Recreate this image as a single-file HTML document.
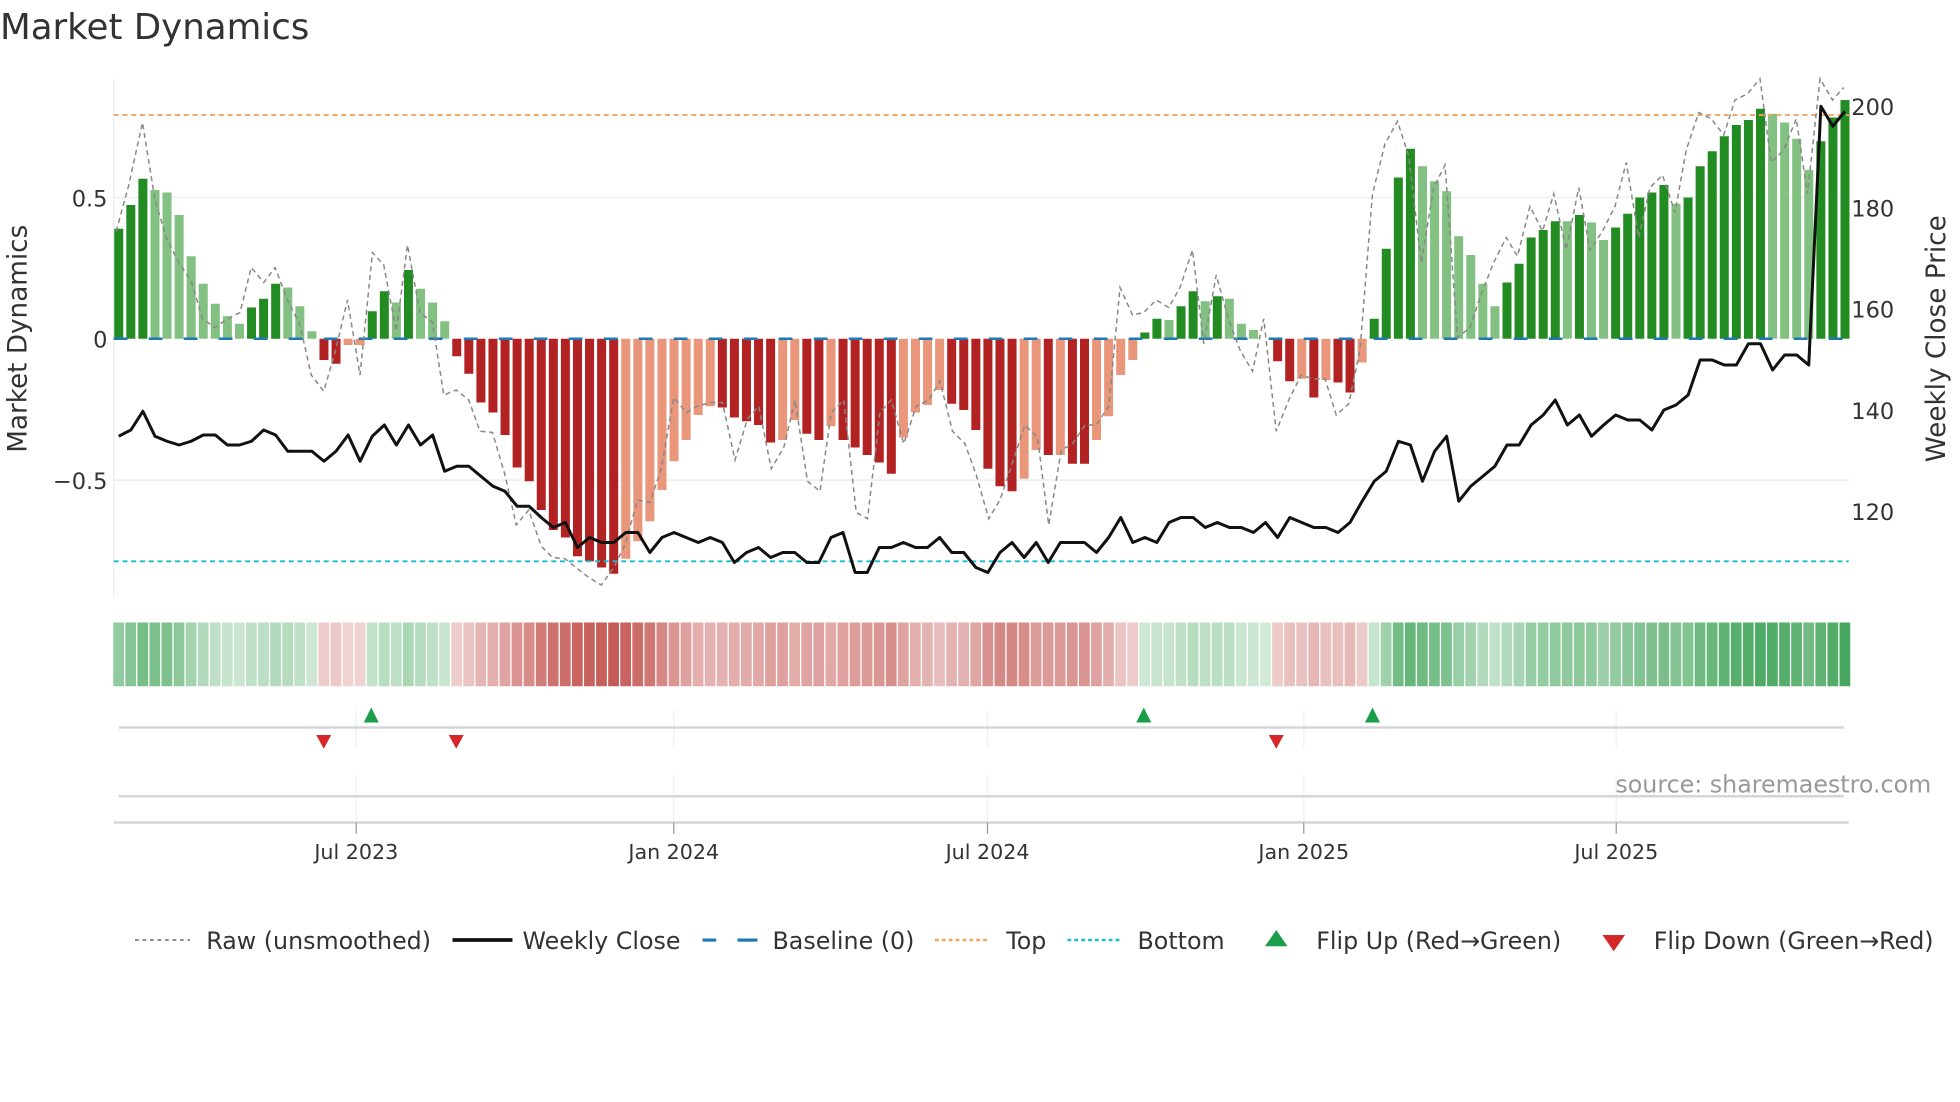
<!DOCTYPE html>
<html><head><meta charset="utf-8"><style>
html,body{margin:0;padding:0;background:#fff;overflow:hidden}
svg{display:block}
text{font-family:"DejaVu Sans","Liberation Sans",sans-serif}
</style></head><body>
<svg id="s" width="1960" height="1102" viewBox="0 0 1568 881.6" xmlns="http://www.w3.org/2000/svg">
<rect width="1568" height="882" fill="#fff"/>
<text x="0" y="31" font-size="28.5" fill="#333">Market Dynamics</text>
<line x1="91" y1="63" x2="91" y2="478" stroke="#e8ebf0" stroke-width="1"/>
<line x1="91" y1="158" x2="1479" y2="158" stroke="#eef0f4" stroke-width="1.5"/>
<line x1="91" y1="384" x2="1479" y2="384" stroke="#eef0f4" stroke-width="1.5"/>
<g font-size="18" fill="#333" text-anchor="end">
<text x="86" y="165">0.5</text><text x="86" y="278">0</text><text x="86" y="391">−0.5</text>
</g>
<g font-size="18" fill="#333">
<text x="1481" y="92">200</text><text x="1481" y="173">180</text><text x="1481" y="254">160</text><text x="1481" y="335">140</text><text x="1481" y="416">120</text>
</g>
<text transform="translate(21,271) rotate(-90)" font-size="21" fill="#333" text-anchor="middle">Market Dynamics</text>
<text transform="translate(1556,271) rotate(-90)" font-size="21" fill="#333" text-anchor="middle">Weekly Close Price</text>
<g id="bars"></g>
<line x1="91" y1="271" x2="1479" y2="271" stroke="#1f77b4" stroke-width="2" stroke-dasharray="11,17"/>
<line x1="91" y1="92" x2="1479" y2="92" stroke="#f4a460" stroke-width="1.5" stroke-dasharray="4,3"/>
<line x1="91" y1="449" x2="1479" y2="449" stroke="#17becf" stroke-width="1.5" stroke-dasharray="4,3"/>
<polyline id="raw" fill="none" stroke="#888" stroke-width="1.2" stroke-dasharray="4,3"/>
<polyline id="close" fill="none" stroke="#111" stroke-width="2.4" stroke-linejoin="round"/>
<g id="heat"></g>
<g stroke="#eef0f2" stroke-width="1">
<line x1="285" y1="568" x2="285" y2="598"/><line x1="539" y1="568" x2="539" y2="598"/><line x1="790" y1="568" x2="790" y2="598"/><line x1="1043" y1="568" x2="1043" y2="598"/><line x1="1293" y1="568" x2="1293" y2="598"/>
<line x1="285" y1="620" x2="285" y2="658"/><line x1="539" y1="620" x2="539" y2="658"/><line x1="790" y1="620" x2="790" y2="658"/><line x1="1043" y1="620" x2="1043" y2="658"/><line x1="1293" y1="620" x2="1293" y2="658"/>
</g>
<line x1="95" y1="582" x2="1475" y2="582" stroke="#d3d6d8" stroke-width="2"/>
<line x1="95" y1="637" x2="1475" y2="637" stroke="#d3d6d8" stroke-width="2"/>
<line x1="91" y1="658" x2="1479" y2="658" stroke="#d3d6d8" stroke-width="2"/>
<g stroke="#999" stroke-width="1">
<line x1="285" y1="658" x2="285" y2="667"/><line x1="539" y1="658" x2="539" y2="667"/><line x1="790" y1="658" x2="790" y2="667"/><line x1="1043" y1="658" x2="1043" y2="667"/><line x1="1293" y1="658" x2="1293" y2="667"/>
</g>
<g fill="#1a9e4a"><polygon points="297,566 291,578 303,578"/><polygon points="915,566 909,578 921,578"/><polygon points="1098,566 1092,578 1104,578"/></g>
<g fill="#d62728"><polygon points="253,588 265,588 259,599"/><polygon points="359,588 371,588 365,599"/><polygon points="1015,588 1027,588 1021,599"/></g>
<text x="1545" y="634" font-size="19" fill="#999" text-anchor="end">source: sharemaestro.com</text>
<g font-size="16.5" fill="#333" text-anchor="middle">
<text x="285" y="687">Jul 2023</text><text x="539" y="687">Jan 2024</text><text x="790" y="687">Jul 2024</text><text x="1043" y="687">Jan 2025</text><text x="1293" y="687">Jul 2025</text>
</g>
<g font-size="19" fill="#333">
<line x1="108" y1="752" x2="152" y2="752" stroke="#888" stroke-width="1.5" stroke-dasharray="3,3"/>
<text x="165" y="759">Raw (unsmoothed)</text>
<line x1="362" y1="752" x2="410" y2="752" stroke="#111" stroke-width="3"/>
<text x="418" y="759">Weekly Close</text>
<line x1="562" y1="752" x2="606" y2="752" stroke="#1f77b4" stroke-width="2.5" stroke-dasharray="11,17"/>
<line x1="591" y1="752" x2="606" y2="752" stroke="#1f77b4" stroke-width="2.5"/>
<text x="618" y="759">Baseline (0)</text>
<line x1="748" y1="752" x2="792" y2="752" stroke="#f4a460" stroke-width="2" stroke-dasharray="3,2.5"/>
<text x="805" y="759">Top</text>
<line x1="854" y1="752" x2="898" y2="752" stroke="#17becf" stroke-width="2" stroke-dasharray="3,2.5"/>
<text x="910" y="759">Bottom</text>
<polygon points="1021,744 1012,757 1030,757" fill="#1a9e4a"/>
<text x="1053" y="759">Flip Up (Red→Green)</text>
<polygon points="1282,748 1300,748 1291,761" fill="#d62728"/>
<text x="1323" y="759">Flip Down (Green→Red)</text>
</g>
</svg>
<script>
var NS="http://www.w3.org/2000/svg";
var B="183D 164D 143D 152L 154L 172L 205L 227L 243L 253L 259L 246D 239D 227D 230L 245L 265L 288R 291R 276S 276S 249D 233D 242L 216D 231L 242L 257L 285R 299R 322R 330R 348R 374R 385R 408R 424R 430R 445R 449R 454R 459R 447S 433S 417S 392S 369S 352S 332S 325S 326R 334R 337R 340R 354R 352S 336S 347R 352R 341S 352R 358R 364R 370R 379R 350S 330S 324S 312S 323R 328R 344R 375R 389R 393R 383S 360S 364R 364S 371R 371R 352S 333S 300S 288S 266D 255D 256L 245D 233D 241L 237D 239L 259L 264L 271N 289R 305R 303S 318R 304S 306R 314R 290S 255D 199D 142D 119D 133L 145L 153L 189L 204L 227L 245L 226D 211D 190D 184D 177D 177L 172D 178L 192L 182D 171D 158D 154D 148D 163L 158D 133D 121D 109D 100D 96D 87D 91L 98L 111L 136L 113D 94D 80D".split(" ");
var C=[349,344,329,349,353,356,353,348,348,356,356,353,344,348,361,361,361,369,361,348,369,349,340,356,340,356,348,377,373,373,381,389,393,405,405,414,422,418,438,430,434,434,426,426,442,430,426,430,434,430,434,450,442,438,446,442,442,450,450,430,426,458,458,438,438,434,438,438,430,442,442,454,458,442,434,446,434,450,434,434,434,442,430,414,434,430,434,418,414,414,422,418,422,422,426,418,430,414,418,422,422,426,418,401,385,377,353,356,385,361,349,401,389,381,373,356,356,340,332,320,340,332,349,340,332,336,336,344,328,324,316,288,288,292,292,275,275,296,284,284,292,85,101,89];
var R="93,185 103,148 114,98 124,160 133,190 143,210 153,225 162,255 172,262 182,255 192,250 201,214 211,226 220,214 230,240 240,260 249,300 259,313 268,282 278,240 288,300 298,202 307,212 317,265 326,196 336,250 346,258 355,316 365,312 375,320 384,345 394,346 404,380 413,420 423,408 433,437 442,446 452,447 462,455 471,462 481,468 491,454 500,436 510,400 520,402 529,375 539,318 549,330 558,325 568,322 578,322 588,368 598,335 607,325 617,375 627,358 636,320 646,385 656,393 665,330 675,320 685,410 694,415 704,330 713,320 723,355 733,325 743,320 752,305 762,345 772,355 781,380 791,415 800,400 810,370 820,340 830,350 839,420 849,360 858,355 868,340 877,340 887,325 896,230 906,252 915,250 925,240 935,246 944,230 954,200 963,275 973,220 983,256 992,280 1002,297 1011,255 1021,345 1031,320 1041,300 1050,303 1060,303 1069,332 1079,323 1088,280 1098,155 1108,115 1118,97 1127,125 1137,210 1147,150 1156,132 1166,270 1176,262 1185,235 1195,210 1205,190 1214,205 1224,165 1234,185 1243,155 1253,200 1263,150 1272,200 1282,185 1292,165 1301,130 1311,190 1320,150 1330,140 1340,170 1349,120 1359,90 1369,95 1379,108 1388,80 1398,75 1408,63 1417,130 1427,120 1437,95 1446,155 1456,63 1466,80 1475,70";
var col={D:"#228b22",L:"#82c182",R:"#b22222",S:"#e9967a"};
var bars=document.getElementById("bars"),heat=document.getElementById("heat"),pts=[];
var step=(1476-95)/143;
for(var i=0;i<B.length;i++){
 var y=parseFloat(B[i]),t=B[i].slice(-1),x=95+i*step;
 if(t!="N"){var r=document.createElementNS(NS,"rect");
  r.setAttribute("x",x-3.6);r.setAttribute("width",7.2);
  r.setAttribute("y",Math.min(y,271));r.setAttribute("height",Math.abs(271-y));
  r.setAttribute("fill",col[t]);bars.appendChild(r);}
 var v=(271-y)/226,h=document.createElementNS(NS,"rect");
 h.setAttribute("x",x-4.4);h.setAttribute("width",8.6);h.setAttribute("y",498);h.setAttribute("height",51);
 var a=0.22+0.8*Math.abs(v); if(a>1)a=1;
 h.setAttribute("fill",v>=0?"rgba(52,158,78,"+a+")":"rgba(190,70,65,"+a+")");
 heat.appendChild(h);
 pts.push(x.toFixed(1)+","+C[i]);
}
document.getElementById("close").setAttribute("points",pts.join(" "));
document.getElementById("raw").setAttribute("points",R);
</script>
</body></html>
